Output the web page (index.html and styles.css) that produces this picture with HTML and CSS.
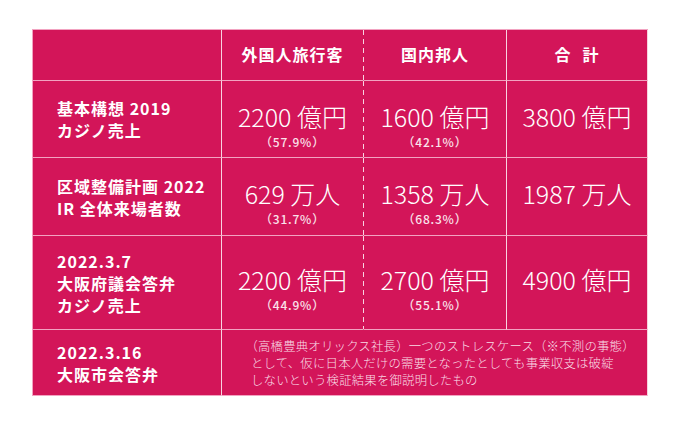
FILE: index.html
```html
<!DOCTYPE html>
<html lang="ja">
<head>
<meta charset="utf-8">
<title>IR 試算比較</title>
<link rel="stylesheet" href="styles.css">
</head>
<body>
<div class="table">
  <div class="cell head"></div>
  <div class="cell head dash">外国人旅行客</div>
  <div class="cell head">国内邦人</div>
  <div class="cell head">合<span class="gap"></span>計</div>

  <div class="cell label"><p>基本構想 2019</p><p>カジノ売上</p></div>
  <div class="cell num dash"><div class="big">2200 億円</div><div class="pct">（57.9%）</div></div>
  <div class="cell num"><div class="big">1600 億円</div><div class="pct">（42.1%）</div></div>
  <div class="cell num"><div class="big">3800 億円</div><div class="pct"></div></div>

  <div class="cell label"><p>区域整備計画 2022</p><p>IR 全体来場者数</p></div>
  <div class="cell num dash"><div class="big">629 万人</div><div class="pct">（31.7%）</div></div>
  <div class="cell num"><div class="big">1358 万人</div><div class="pct">（68.3%）</div></div>
  <div class="cell num"><div class="big">1987 万人</div><div class="pct"></div></div>

  <div class="cell label"><p>2022.3.7</p><p>大阪府議会答弁</p><p>カジノ売上</p></div>
  <div class="cell num dash"><div class="big">2200 億円</div><div class="pct">（44.9%）</div></div>
  <div class="cell num"><div class="big">2700 億円</div><div class="pct">（55.1%）</div></div>
  <div class="cell num"><div class="big">4900 億円</div><div class="pct"></div></div>

  <div class="cell label"><p>2022.3.16</p><p>大阪市会答弁</p></div>
  <div class="cell note"><p class="first">（高橋豊典オリックス社長）一つのストレスケース（※不測の事態）</p><p>として、仮に日本人だけの需要となったとしても事業収支は破綻</p><p>しないという検証結果を御説明したもの</p></div>
</div>
</body>
</html>
```
FILE: styles.css
```css
:root {
  --fill: #d31559;
  --hline: #f2a3c1;
  --vline: #f8d3e0;
}
html, body {
  margin: 0;
  padding: 0;
  background: #ffffff;
}
body {
  font-family: "Noto Sans CJK JP", "Noto Sans", sans-serif;
  color: #ffffff;
}
p {
  margin: 0;
}
.table {
  display: grid;
  grid-template-columns: 189px 142px 143px 141px;
  grid-template-rows: 51px 77px 78px 94px 66px;
  width: 615px;
  margin: 29px 0 0 32px;
  background: var(--fill);
  border-top: 1px solid var(--hline);
  border-left: 1px solid var(--hline);
}
.cell {
  box-sizing: border-box;
  border-right: 1px solid var(--vline);
  border-bottom: 1px solid var(--hline);
  display: flex;
  align-items: center;
  justify-content: center;
  min-width: 0;
}
.dash {
  border-right-color: transparent;
  background-image: linear-gradient(to bottom, var(--vline) 5px, transparent 5px);
  background-size: 1px 9px;
  background-repeat: repeat-y;
  background-origin: border-box;
  background-position: right top;
}
.head {
  font-weight: 700;
  font-size: 16px;
  letter-spacing: 1px;
  line-height: 20px;
  padding-bottom: 2px;
}
.gap {
  display: inline-block;
  width: 11px;
}
.label {
  flex-direction: column;
  align-items: flex-start;
  padding-left: 24px;
  font-weight: 700;
  font-size: 16px;
  letter-spacing: 1px;
}
.label p {
  line-height: 16px;
  padding: 3px 0;
}
.num {
  flex-direction: column;
  padding-top: 13px;
}
.big {
  font-weight: 300;
  font-size: 25px;
  line-height: 28px;
  white-space: nowrap;
}
.pct {
  margin-top: 4px;
  height: 16px;
  font-size: 12px;
  line-height: 16px;
  font-weight: 500;
  letter-spacing: 0.8px;
  color: #fae3eb;
}
.note {
  grid-column: 2 / span 3;
  flex-direction: column;
  align-items: flex-start;
  padding-left: 29px;
  font-weight: 300;
  font-size: 12.4px;
  letter-spacing: 0.2px;
  color: #f9dce6;
  white-space: nowrap;
}
.note p {
  line-height: 12px;
  padding: 2.5px 0;
}
.note .first {
  margin-left: -0.45em;
}
```
